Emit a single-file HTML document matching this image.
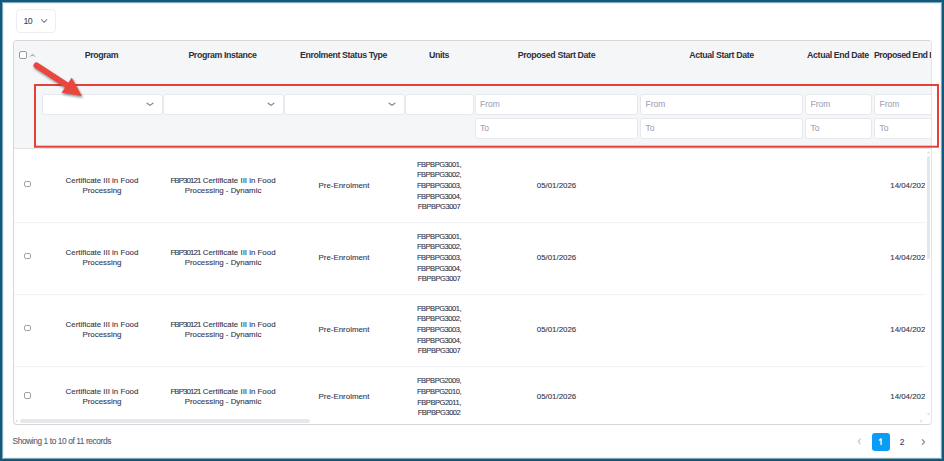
<!DOCTYPE html>
<html><head><meta charset="utf-8">
<style>
*{box-sizing:border-box;margin:0;padding:0}
html,body{width:944px;height:461px;overflow:hidden;background:#fff}
body{position:relative;font-family:"Liberation Sans",sans-serif;}
.frame{position:absolute;left:0;top:0;width:944px;height:461px;border:2px solid #13597c;box-shadow:inset 0 0 0 1px rgba(19,89,124,0.5),inset 0 0 0 2px rgba(19,89,124,0.08);pointer-events:none;z-index:50}
.abs{position:absolute}
.psel{left:16px;top:9px;width:40px;height:24px;border:1px solid #eceef3;border-radius:4px;background:#fff}
.psel .t{position:absolute;left:6.6px;top:5.5px;font-size:8.8px;line-height:11px;color:#3f4358;letter-spacing:-0.7px}
.chev{position:absolute;width:4px;height:4px;border-right:1px solid #7e8299;border-bottom:1px solid #7e8299;transform:rotate(45deg)}
.tbl{left:13px;top:40px;width:919px;height:385px;border:1px solid #d6d6d6;border-right-color:#e4e4e4;border-radius:4px;overflow:hidden;background:#fff}
.hdr{position:absolute;left:0;top:0;width:917px;height:108px;background:#f5f6f8;border-bottom:1px solid #e3e3e3}
.ht{position:absolute;top:8px;font-size:8.8px;line-height:12px;letter-spacing:-0.38px;font-weight:bold;color:#2c2f40;text-align:center;white-space:nowrap}
.inp{position:absolute;height:20px;background:#fff;border:1px solid #e8e9ef;border-radius:3px}
.ph{position:absolute;left:4.5px;top:4px;font-size:8.5px;line-height:10.5px;color:#9fa3b5;letter-spacing:0px}
.cb{position:absolute;border:1px solid #a2a2a2;border-radius:2px;background:#fff}
.row{position:absolute;left:0;width:917px;height:72px;border-bottom:1px solid #f3f3f3}
.c{position:absolute;text-align:center;font-size:7.9px;line-height:10px;color:#33364a;white-space:nowrap}
.u{position:absolute;text-align:center;font-size:7.5px;line-height:10.65px;padding-top:1.4px;color:#33364a;letter-spacing:-0.45px;white-space:nowrap}
.n{letter-spacing:-0.9px}
.c,.u,.foot,.psel .t,.pg2{-webkit-text-stroke:0.1px currentColor}
.ph{-webkit-text-stroke:0.08px currentColor}
.cell{position:absolute;display:flex;align-items:center;justify-content:center}
.cell .c,.cell .u{position:static}
.sep{position:absolute;left:0;width:917px;height:1px;background:#f1f1f3}
.foot{left:12.5px;top:436px;font-size:8.4px;line-height:10.5px;color:#5a5e73;letter-spacing:-0.42px}
.pg1{left:872px;top:433px;width:18px;height:18px;border-radius:3px;background:#0b9cf5;color:#fff;font-size:8.5px;text-align:center;line-height:18px}
.pg2{left:897px;top:433px;width:10px;height:18px;color:#3f4254;font-size:8.5px;text-align:center;line-height:18px}
</style></head><body>
<div class="frame"></div>

<div class="abs psel"><div class="t">10</div></div>

<div class="abs tbl">
  <div class="hdr">
    <div class="cb" style="left:5px;top:9.5px;width:8px;height:8px;border-color:#9a9a9a"></div>
    
    <div class="ht" style="left:28px;width:119px">Program</div>
    <div class="ht" style="left:149px;width:119px">Program Instance</div>
    <div class="ht" style="left:270px;width:119px">Enrolment Status Type</div>
    <div class="ht" style="left:391px;width:68px">Units</div>
    <div class="ht" style="left:461px;width:163px">Proposed Start Date</div>
    <div class="ht" style="left:626px;width:163px">Actual Start Date</div>
    <div class="ht" style="left:791px;width:66px">Actual End Date</div>
    <div class="ht" style="left:859px;width:76px;text-align:left;padding-left:1px;letter-spacing:-0.52px">Proposed End Date</div>

    <div class="inp" style="left:28px;top:53px;height:21px;width:120.5px"></div>
    <div class="inp" style="left:149px;top:53px;height:21px;width:120.5px"></div>
    <div class="inp" style="left:270px;top:53px;height:21px;width:120.5px"></div>
    <div class="inp" style="left:391px;top:53px;height:21px;width:68.5px"></div>
    <div class="inp" style="left:460.5px;top:53px;height:21px;width:163.5px"><div class="ph">From</div></div>
    <div class="inp" style="left:460.5px;top:77.3px;height:20.5px;width:163.5px"><div class="ph">To</div></div>
    <div class="inp" style="left:626px;top:53px;height:21px;width:163px"><div class="ph">From</div></div>
    <div class="inp" style="left:626px;top:77.3px;height:20.5px;width:163px"><div class="ph">To</div></div>
    <div class="inp" style="left:791px;top:53px;height:21px;width:67px"><div class="ph">From</div></div>
    <div class="inp" style="left:791px;top:77.3px;height:20.5px;width:67px"><div class="ph">To</div></div>
    <div class="inp" style="left:860px;top:53px;height:21px;width:76px"><div class="ph">From</div></div>
    <div class="inp" style="left:860px;top:77.3px;height:20.5px;width:76px"><div class="ph">To</div></div>
  </div>

  <div id="body" class="abs" style="left:0;top:108px;width:911px;height:270px;overflow:hidden">
<!--BODY-->
<div class="cb" style="left:10px;top:31.5px;width:7px;height:6.5px"></div>
<div class="cell" style="left:28px;top:0px;width:120px;height:73px"><div class="c">Certificate III in Food<br>Processing</div></div>
<div class="cell" style="left:149px;top:0px;width:120px;height:73px"><div class="c"><span class="n">FBP30121</span> Certificate III in Food<br>Processing - Dynamic</div></div>
<div class="cell" style="left:270px;top:0px;width:120px;height:73px"><div class="c">Pre-Enrolment</div></div>
<div class="cell" style="left:391px;top:0px;width:68px;height:73px"><div class="u">FBPBPG3001,<br>FBPBPG3002,<br>FBPBPG3003,<br>FBPBPG3004,<br>FBPBPG3007</div></div>
<div class="cell" style="left:461px;top:0px;width:163px;height:73px"><div class="c">05/01/2026</div></div>
<div class="cell" style="left:859px;top:0px;width:74px;height:73px"><div class="c">14/04/2026</div></div>
<div class="cb" style="left:10px;top:103.5px;width:7px;height:6.5px"></div>
<div class="cell" style="left:28px;top:73px;width:120px;height:71px"><div class="c">Certificate III in Food<br>Processing</div></div>
<div class="cell" style="left:149px;top:73px;width:120px;height:71px"><div class="c"><span class="n">FBP30121</span> Certificate III in Food<br>Processing - Dynamic</div></div>
<div class="cell" style="left:270px;top:73px;width:120px;height:71px"><div class="c">Pre-Enrolment</div></div>
<div class="cell" style="left:391px;top:73px;width:68px;height:71px"><div class="u">FBPBPG3001,<br>FBPBPG3002,<br>FBPBPG3003,<br>FBPBPG3004,<br>FBPBPG3007</div></div>
<div class="cell" style="left:461px;top:73px;width:163px;height:71px"><div class="c">05/01/2026</div></div>
<div class="cell" style="left:859px;top:73px;width:74px;height:71px"><div class="c">14/04/2026</div></div>
<div class="cb" style="left:10px;top:175.5px;width:7px;height:6.5px"></div>
<div class="cell" style="left:28px;top:145px;width:120px;height:71px"><div class="c">Certificate III in Food<br>Processing</div></div>
<div class="cell" style="left:149px;top:145px;width:120px;height:71px"><div class="c"><span class="n">FBP30121</span> Certificate III in Food<br>Processing - Dynamic</div></div>
<div class="cell" style="left:270px;top:145px;width:120px;height:71px"><div class="c">Pre-Enrolment</div></div>
<div class="cell" style="left:391px;top:145px;width:68px;height:71px"><div class="u">FBPBPG3001,<br>FBPBPG3002,<br>FBPBPG3003,<br>FBPBPG3004,<br>FBPBPG3007</div></div>
<div class="cell" style="left:461px;top:145px;width:163px;height:71px"><div class="c">05/01/2026</div></div>
<div class="cell" style="left:859px;top:145px;width:74px;height:71px"><div class="c">14/04/2026</div></div>
<div class="cb" style="left:10px;top:243.0px;width:7px;height:6.5px"></div>
<div class="cell" style="left:28px;top:218px;width:120px;height:60px"><div class="c">Certificate III in Food<br>Processing</div></div>
<div class="cell" style="left:149px;top:218px;width:120px;height:60px"><div class="c"><span class="n">FBP30121</span> Certificate III in Food<br>Processing - Dynamic</div></div>
<div class="cell" style="left:270px;top:218px;width:120px;height:60px"><div class="c">Pre-Enrolment</div></div>
<div class="cell" style="left:391px;top:218px;width:68px;height:60px"><div class="u">FBPBPG2009,<br>FBPBPG2010,<br>FBPBPG2011,<br>FBPBPG3002</div></div>
<div class="cell" style="left:461px;top:218px;width:163px;height:60px"><div class="c">05/01/2026</div></div>
<div class="cell" style="left:859px;top:218px;width:74px;height:60px"><div class="c">14/04/2026</div></div>
<div class="sep" style="top:73px"></div>
<div class="sep" style="top:145px"></div>
<div class="sep" style="top:217px"></div>
<!--/BODY-->
</div>
</div>

<svg class="abs" style="left:0;top:0;z-index:40" width="944" height="461" viewBox="0 0 944 461">
<defs><filter id="sh" x="-20%" y="-20%" width="140%" height="140%"><feDropShadow dx="0.8" dy="1.6" stdDeviation="1" flood-color="#0f3440" flood-opacity="0.55"/></filter></defs>
<rect x="35" y="85" width="903" height="61.7" fill="none" stroke="#e5403a" stroke-width="2"/>
<g filter="url(#sh)">
<line x1="36.5" y1="65.5" x2="68" y2="86" stroke="#e8463e" stroke-width="6" stroke-linecap="round"/>
<polygon points="81.5,95.7 71.7,78.1 62,92.4" fill="#e8463e" stroke="#e8463e" stroke-width="0.6" stroke-linejoin="round"/>
</g>
</svg>
<svg class="abs" style="left:0;top:0;z-index:30" width="944" height="461" fill="none" stroke-linecap="round" stroke-linejoin="round">
<polyline points="41.5,19.6 44.2,22.3 46.8,19.6" stroke="#7e8299" stroke-width="1.1"/>
<polyline points="30.2,56.4 32.6,54.4 34.9,56.4" stroke="#b5b8c8" stroke-width="1.1"/>
<polyline points="147.1,103.2 150,105.4 152.9,103.2" stroke="#7e8299" stroke-width="1.15"/>
<polyline points="268.1,103.2 271,105.4 273.9,103.2" stroke="#7e8299" stroke-width="1.15"/>
<polyline points="389.1,103.2 392,105.4 394.9,103.2" stroke="#7e8299" stroke-width="1.15"/>
<polyline points="860.3,438.9 858.3,441.4 860.1,443.8" stroke="#c5c6d2" stroke-width="1.3"/>
<polyline points="922.4,439.8 924.5,442 922.4,444.2" stroke="#8a8ea3" stroke-width="1.3"/>
</svg>
<!--SB-->
<div class="abs" style="left:927px;top:156px;width:3px;height:103px;border-radius:2px;background:#e3e6eb;z-index:5"></div>
<div class="abs" style="left:20px;top:419px;width:290px;height:4px;border-radius:2px;background:#e5e8ec;z-index:5"></div>
<svg class="abs" style="left:0;top:0;z-index:6" width="944" height="461">
<polygon points="926.8,153.5 928.5,151.3 930.2,153.5" fill="#dcdee3"/>
<polygon points="926.8,413.3 928.5,415.5 930.2,413.3" fill="#dcdee3"/>
<polygon points="17.5,419.3 15.5,421 17.5,422.7" fill="#dcdee3"/>
<polygon points="920.5,419.3 922.5,421 920.5,422.7" fill="#dcdee3"/>
</svg>
<!--/SB-->
<div class="abs foot">Showing 1 to 10 of 11 records</div>
<div class="abs pg1"><svg width="18" height="18" style="position:absolute;left:0;top:0"><path d="M7.6,7.1 L9.1,5.9 L9.1,11.6" fill="none" stroke="#fff" stroke-width="1.35" stroke-linecap="round" stroke-linejoin="round"/></svg></div>
<div class="abs pg2">2</div>

</body></html>
